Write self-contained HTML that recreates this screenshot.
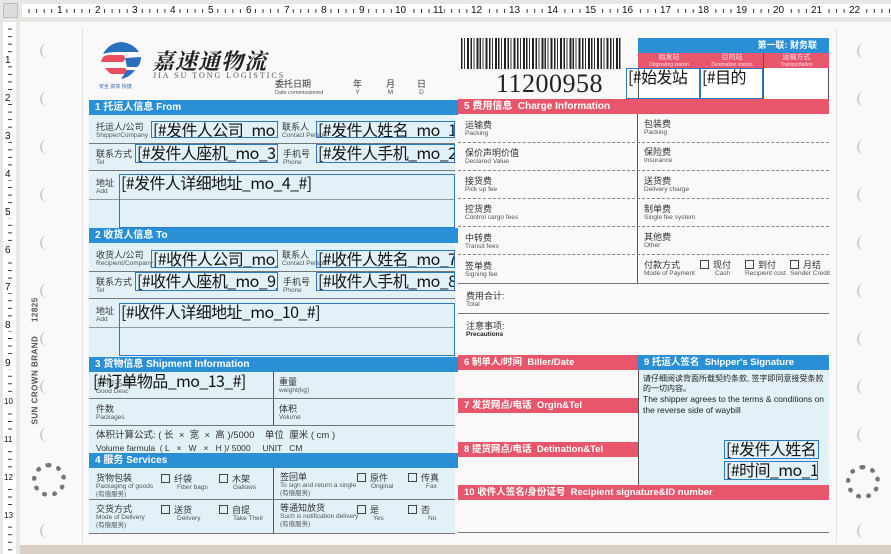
<!DOCTYPE html>
<html><head><meta charset="utf-8">
<style>
*{margin:0;padding:0;box-sizing:border-box}
body{width:891px;height:554px;overflow:hidden;background:#e9e7e4;font-family:"Liberation Sans","Noto Sans CJK SC",sans-serif;position:relative}
.a{position:absolute}
.rt{left:22px;top:4px;width:869px;height:13px;background:#fff repeating-linear-gradient(90deg,transparent 0,transparent 6.56px,#333 6.56px,#333 7.56px);background-size:7.56px 4px;background-repeat:repeat-x;background-position:0 5px}
.rl{left:3px;top:22px;width:13px;height:532px;background:#fff repeating-linear-gradient(180deg,transparent 0,transparent 6.56px,#333 6.56px,#333 7.56px);background-size:4px 7.56px;background-repeat:repeat-y;background-position:5px 0}
.n{position:absolute;font-size:10px;color:#111;background:#fff;line-height:11px;padding:0 1px}
.page{left:20px;top:22px;width:871px;height:524px;background:#fbf8fa}
.bb{background:#2b8fd6;color:#fff;font-size:10px;font-weight:bold;line-height:15px;padding-left:6px}
.rb{background:#e8566c;color:#fff;font-size:9.5px;font-weight:bold;line-height:15px;padding-left:6px}
.lt{font-size:9px;color:#333;line-height:10px}
.lt i{display:block;font-style:normal;font-size:6.5px;color:#555;line-height:8px}
.f{position:absolute;border:1px solid #2d78c4;font-family:"Noto Sans CJK SC",sans-serif;font-size:16px;line-height:15px;letter-spacing:-0.6px;color:#111;white-space:nowrap;overflow:hidden;padding-left:1px}
.hl{position:absolute;height:1px;background:#777}
.dl{position:absolute;height:0;border-top:1px dashed #888}
.vl{position:absolute;width:1px;background:#555}
.cy{background:#e2f1f7}
.pin{position:absolute;width:12px;height:14px;border-left:2px solid #ccc;border-radius:50%}
.cb{display:inline-block;width:9px;height:9px;border:1px solid #444;vertical-align:-1px;margin-right:4px}
</style></head><body>
<div class="a rt"></div>
<div class="a rl"></div>
<div class="a" style="left:3px;top:3px;width:15px;height:15px;border:1px solid #bbb;background:#ddd"></div>
<span class="n" style="left:56px;top:5px">1</span><span class="n" style="left:94px;top:5px">2</span><span class="n" style="left:131px;top:5px">3</span><span class="n" style="left:169px;top:5px">4</span><span class="n" style="left:207px;top:5px">5</span><span class="n" style="left:245px;top:5px">6</span><span class="n" style="left:283px;top:5px">7</span><span class="n" style="left:320px;top:5px">8</span><span class="n" style="left:358px;top:5px">9</span><span class="n" style="left:394px;top:5px">10</span><span class="n" style="left:432px;top:5px">11</span><span class="n" style="left:470px;top:5px">12</span><span class="n" style="left:508px;top:5px">13</span><span class="n" style="left:546px;top:5px">14</span><span class="n" style="left:584px;top:5px">15</span><span class="n" style="left:621px;top:5px">16</span><span class="n" style="left:659px;top:5px">17</span><span class="n" style="left:697px;top:5px">18</span><span class="n" style="left:735px;top:5px">19</span><span class="n" style="left:772px;top:5px">20</span><span class="n" style="left:810px;top:5px">21</span><span class="n" style="left:848px;top:5px">22</span>
<span class="n" style="left:4px;top:55px">1</span><span class="n" style="left:4px;top:93px">2</span><span class="n" style="left:4px;top:131px">3</span><span class="n" style="left:4px;top:169px">4</span><span class="n" style="left:4px;top:207px">5</span><span class="n" style="left:4px;top:245px">6</span><span class="n" style="left:4px;top:282px">7</span><span class="n" style="left:4px;top:320px">8</span><span class="n" style="left:4px;top:358px">9</span><span class="n" style="left:3px;top:396px;font-size:8px">10</span><span class="n" style="left:3px;top:434px;font-size:8px">11</span><span class="n" style="left:3px;top:472px;font-size:8px">12</span><span class="n" style="left:3px;top:510px;font-size:8px">13</span>

<div class="a page"></div>
<div class="a" style="left:20px;top:545px;width:871px;height:9px;background:#d8d0c4"></div>
<div class="vl" style="left:82px;top:28px;height:515px;background:#e4e0e4"></div>
<div class="vl" style="left:836px;top:28px;height:515px;background:#e4e0e4"></div>
<div class="pin" style="left:40px;top:44px"></div><div class="pin" style="left:40px;top:92px"></div><div class="pin" style="left:40px;top:140px"></div><div class="pin" style="left:40px;top:188px"></div><div class="pin" style="left:40px;top:236px"></div><div class="pin" style="left:40px;top:284px"></div><div class="pin" style="left:40px;top:332px"></div><div class="pin" style="left:40px;top:380px"></div><div class="pin" style="left:40px;top:428px"></div><div class="pin" style="left:40px;top:524px"></div>
<div class="pin" style="left:857px;top:44px"></div><div class="pin" style="left:857px;top:92px"></div><div class="pin" style="left:857px;top:140px"></div><div class="pin" style="left:857px;top:188px"></div><div class="pin" style="left:857px;top:236px"></div><div class="pin" style="left:857px;top:284px"></div><div class="pin" style="left:857px;top:332px"></div><div class="pin" style="left:857px;top:380px"></div><div class="pin" style="left:857px;top:428px"></div><div class="pin" style="left:857px;top:524px"></div>
<div class="a" style="top:355px;width:130px;transform:rotate(-90deg);transform-origin:center;font-size:8px;font-weight:bold;color:#555;letter-spacing:0.5px;left:-30px">SUN CROWN BRAND &nbsp;&nbsp;&nbsp; 12825</div>
<div class="a" style="left:32px;top:463px;width:34px;height:34px;border-radius:50%;border:5px dotted #777"></div>
<div class="a" style="left:846px;top:465px;width:34px;height:34px;border-radius:50%;border:5px dotted #777"></div>

<svg class="a" style="left:99px;top:40px" width="44" height="42" viewBox="0 0 44 42">
<path d="M4 14 Q10 3 22 2 Q34 3 40 12 L18 12 Q10 12 4 14Z" fill="#2b6fc0"/>
<path d="M2 22 Q3 15 10 15 L24 15 Q28 18 24 22 Z" fill="#e8505f"/>
<path d="M26 18 L42 17 Q42 24 38 27 L28 27 Z" fill="#2b6fc0"/>
<path d="M6 28 L26 28 Q30 31 26 34 L12 34 Q8 31 6 28Z" fill="#e8505f"/>
<path d="M28 30 L36 30 Q30 38 22 39 Z" fill="#2b6fc0"/>
</svg>
<div class="a" style="left:99px;top:83px;font-size:5px;color:#2b6fc0">安全 高效 快捷</div>
<div class="a" style="left:152px;top:45px;font-size:22px;color:#222;font-weight:bold;font-family:'Noto Serif CJK SC',serif;font-style:italic;letter-spacing:1px">嘉速通物流</div>
<div class="a" style="left:153px;top:71px;font-size:8px;color:#555;letter-spacing:2px;font-family:'Liberation Serif',serif">JIA SU TONG LOGISTICS</div>
<div class="a lt" style="left:275px;top:79px">委托日期<i style="font-size:5.5px">Date commissioned</i></div>
<div class="a lt" style="left:353px;top:79px;text-align:center">年<i>Y</i></div>
<div class="a lt" style="left:386px;top:79px;text-align:center">月<i>M</i></div>
<div class="a lt" style="left:417px;top:79px;text-align:center">日<i>D</i></div>

<div class="a cy" style="left:89px;top:114px;width:366px;height:420px"></div>
<div class="a bb" style="left:89px;top:100px;width:369px">1 托运人信息 From</div>
<div class="hl" style="left:89px;top:143px;width:366px"></div>
<div class="hl" style="left:89px;top:170px;width:366px"></div>
<div class="hl" style="left:89px;top:199px;width:366px;background:#999"></div>
<div class="a lt" style="left:96px;top:122px">托运人/公司<i>Shipper/Company</i></div>
<div class="a lt" style="left:282px;top:122px">联系人<i>Contact Person</i></div>
<div class="a lt" style="left:96px;top:149px">联系方式<i>Tel</i></div>
<div class="a lt" style="left:283px;top:149px">手机号<i>Phone</i></div>
<div class="a lt" style="left:96px;top:178px">地址<i>Add</i></div>
<div class="f" style="left:151px;top:121px;width:127px;height:17px">[#发件人公司_mo_</div>
<div class="f" style="left:316px;top:121px;width:139px;height:17px">[#发件人姓名_mo_1</div>
<div class="f" style="left:135px;top:144px;width:143px;height:19px">[#发件人座机_mo_3_</div>
<div class="f" style="left:316px;top:144px;width:139px;height:19px">[#发件人手机_mo_2</div>
<div class="f" style="left:119px;top:174px;width:336px;height:54px">[#发件人详细地址_mo_4_#]</div>

<div class="a bb" style="left:89px;top:228px;width:369px">2 收货人信息 To</div>
<div class="hl" style="left:89px;top:271px;width:366px"></div>
<div class="hl" style="left:89px;top:298px;width:366px"></div>
<div class="hl" style="left:89px;top:327px;width:366px;background:#999"></div>
<div class="a lt" style="left:96px;top:250px">收货人/公司<i>Recipient/Company</i></div>
<div class="a lt" style="left:282px;top:250px">联系人<i>Contact Person</i></div>
<div class="a lt" style="left:96px;top:277px">联系方式<i>Tel</i></div>
<div class="a lt" style="left:283px;top:277px">手机号<i>Phone</i></div>
<div class="a lt" style="left:96px;top:306px">地址<i>Add</i></div>
<div class="f" style="left:151px;top:250px;width:127px;height:18px">[#收件人公司_mo_</div>
<div class="f" style="left:316px;top:250px;width:139px;height:18px">[#收件人姓名_mo_7</div>
<div class="f" style="left:135px;top:272px;width:143px;height:19px">[#收件人座机_mo_9_</div>
<div class="f" style="left:316px;top:272px;width:139px;height:19px">[#收件人手机_mo_8</div>
<div class="f" style="left:119px;top:303px;width:336px;height:53px">[#收件人详细地址_mo_10_#]</div>

<div class="a bb" style="left:89px;top:357px;width:369px">3 货物信息 Shipment Information</div>
<div class="vl" style="left:273px;top:372px;height:54px"></div>
<div class="hl" style="left:89px;top:398px;width:366px"></div>
<div class="hl" style="left:89px;top:425px;width:366px"></div>
<div class="a lt" style="left:96px;top:378px;color:#777">货物名称<i>Good Desc</i></div>
<div class="a lt" style="left:279px;top:377px">重量<i>weight(kg)</i></div>
<div class="a lt" style="left:96px;top:404px">件数<i>Packages</i></div>
<div class="a lt" style="left:279px;top:404px">体积<i>Volume</i></div>
<div class="a" style="left:93px;top:372px;font-family:'Noto Sans CJK SC',sans-serif;font-size:16px;line-height:16px;letter-spacing:-0.6px;color:#111">[#订单物品_mo_13_#]</div>
<div class="a" style="left:96px;top:430px;font-size:9.5px;color:#333;line-height:12px;white-space:pre">体积计算公式: ( 长  ×  宽  ×  高 )/5000    单位  厘米 ( cm )
<span style="font-size:8.5px">Volume farmula  ( L   ×   W   ×   H )/ 5000     UNIT   CM</span></div>

<div class="a bb" style="left:89px;top:453px;width:369px">4 服务 Services</div>
<div class="vl" style="left:273px;top:468px;height:65px"></div>
<div class="hl" style="left:89px;top:499px;width:366px"></div>
<div class="hl" style="left:89px;top:533px;width:366px"></div>
<div class="a lt" style="left:96px;top:473px">货物包装<i>Packaging of goods<br>(有偿服务)</i></div>
<div class="a lt" style="left:161px;top:474px"><span class="cb"></span>纤袋<i style="padding-left:16px">Fiber bags</i></div>
<div class="a lt" style="left:219px;top:474px"><span class="cb"></span>木架<i style="padding-left:14px">Gallows</i></div>
<div class="a lt" style="left:280px;top:472px">签回单<i>To sign and return a single<br>(有偿服务)</i></div>
<div class="a lt" style="left:357px;top:473px"><span class="cb"></span>原件<i style="padding-left:14px">Original</i></div>
<div class="a lt" style="left:408px;top:473px"><span class="cb"></span>传真<i style="padding-left:18px">Fax</i></div>
<div class="a lt" style="left:96px;top:504px">交货方式<i>Mode of Delivery<br>(有偿服务)</i></div>
<div class="a lt" style="left:161px;top:505px"><span class="cb"></span>送货<i style="padding-left:16px">Delivery</i></div>
<div class="a lt" style="left:219px;top:505px"><span class="cb"></span>自提<i style="padding-left:14px">Take Their</i></div>
<div class="a lt" style="left:280px;top:503px">等通知放货<i>Such is notification delivery<br>(有偿服务)</i></div>
<div class="a lt" style="left:357px;top:505px"><span class="cb"></span>是<i style="padding-left:16px">Yes</i></div>
<div class="a lt" style="left:408px;top:505px"><span class="cb"></span>否<i style="padding-left:20px">No</i></div>

<div class="a" style="left:461px;top:38px;width:161px;height:31px;background:repeating-linear-gradient(90deg,#222 0,#222 1.5px,#fff 1.5px,#fff 3px,#333 3px,#333 4px,#fff 4px,#fff 6px,#222 6px,#222 8px,#fff 8px,#fff 9.3px)"></div>
<div class="a" style="left:496px;top:69px;font-family:'Liberation Serif',serif;font-size:26px;color:#222;letter-spacing:0.5px">11200958</div>

<div class="a bb" style="left:638px;top:38px;width:191px;height:15px;text-align:right;padding-right:12px;font-size:9px">第一联: 财务联</div>
<div class="a" style="left:638px;top:53px;width:191px;height:15px;background:#e8566c"></div>
<div class="a" style="left:638px;top:54px;width:62px;text-align:center;color:#fde;font-size:7px;line-height:7px">始发站<br><span style="font-size:5px">Originating station</span></div>
<div class="a" style="left:701px;top:54px;width:62px;text-align:center;color:#fde;font-size:7px;line-height:7px">目的站<br><span style="font-size:5px">Destination station</span></div>
<div class="a" style="left:764px;top:54px;width:65px;text-align:center;color:#fde;font-size:7px;line-height:7px">运输方式<br><span style="font-size:5px">Transportation</span></div>
<div class="a" style="left:638px;top:68px;width:191px;height:31px;border-left:1px solid #555;border-right:1px solid #555;background:#fff"></div>
<div class="vl" style="left:763px;top:53px;height:46px"></div>
<div class="f" style="left:626px;top:68px;width:74px;height:31px">[#始发站</div>
<div class="f" style="left:700px;top:68px;width:63px;height:31px">[#目的</div>

<div class="a rb" style="left:458px;top:99px;width:371px;font-size:10px">5 费用信息 &nbsp;Charge Information</div>
<div class="vl" style="left:637px;top:114px;height:169px"></div>
<div class="dl" style="left:458px;top:142px;width:371px"></div>
<div class="dl" style="left:458px;top:170px;width:371px"></div>
<div class="dl" style="left:458px;top:198px;width:371px"></div>
<div class="dl" style="left:458px;top:226px;width:371px"></div>
<div class="dl" style="left:458px;top:254px;width:371px"></div>
<div class="hl" style="left:458px;top:283px;width:371px"></div>
<div class="hl" style="left:458px;top:313px;width:371px"></div>
<div class="a lt" style="left:465px;top:120px">运输费<i>Packing</i></div>
<div class="a lt" style="left:644px;top:119px">包装费<i>Packing</i></div>
<div class="a lt" style="left:465px;top:148px">保价声明价值<i>Declared Value</i></div>
<div class="a lt" style="left:644px;top:147px">保险费<i>Insurance</i></div>
<div class="a lt" style="left:465px;top:176px">接货费<i>Pick up fee</i></div>
<div class="a lt" style="left:644px;top:176px">送货费<i>Delivery charge</i></div>
<div class="a lt" style="left:465px;top:204px">控货费<i>Control cargo fees</i></div>
<div class="a lt" style="left:644px;top:204px">制单费<i>Single fee system</i></div>
<div class="a lt" style="left:465px;top:233px">中转费<i>Transit fees</i></div>
<div class="a lt" style="left:644px;top:232px">其他费<i>Other</i></div>
<div class="a lt" style="left:465px;top:261px">签单费<i>Signing fee</i></div>
<div class="a lt" style="left:644px;top:260px">付款方式<i>Mode of Payment</i></div>
<div class="a lt" style="left:700px;top:260px"><span class="cb"></span>现付<i style="padding-left:15px">Cash</i></div>
<div class="a lt" style="left:745px;top:260px"><span class="cb"></span>到付<i style="padding-left:0">Recipient cost</i></div>
<div class="a lt" style="left:790px;top:260px"><span class="cb"></span>月结<i style="padding-left:0">Sender Credit</i></div>
<div class="a lt" style="left:466px;top:291px">费用合计:<i>Total</i></div>
<div class="a lt" style="left:466px;top:321px">注意事项:<i style="font-weight:bold;color:#222">Precautions</i></div>

<div class="a rb" style="left:458px;top:355px;width:180px">6 制单人/时间 &nbsp;Biller/Date</div>
<div class="a bb" style="left:638px;top:355px;width:191px;font-size:9.5px">9 托运人签名 &nbsp;Shipper's Signature</div>
<div class="a cy" style="left:638px;top:370px;width:191px;height:115px;border-left:1px solid #555"></div>
<div class="a" style="left:643px;top:374px;width:184px;font-size:8px;line-height:10px;color:#222">请仔细阅读背面所载契约条款, 签字即同意接受条款的一切内容。<br><span style="font-size:8.5px;line-height:11px">The shipper agrees to the terms &amp; conditions on the reverse side of waybill</span></div>
<div class="a rb" style="left:458px;top:398px;width:180px">7 发货网点/电话 &nbsp;Orgin&amp;Tel</div>
<div class="a rb" style="left:458px;top:442px;width:180px">8 提货网点/电话 &nbsp;Detination&amp;Tel</div>
<div class="f" style="left:724px;top:440px;width:95px;height:19px">[#发件人姓名</div>
<div class="f" style="left:724px;top:461px;width:94px;height:19px">[#时间_mo_15</div>
<div class="a rb" style="left:458px;top:485px;width:371px">10 收件人签名/身份证号 &nbsp;Recipient signature&amp;ID number</div>
<div class="hl" style="left:458px;top:532px;width:371px"></div>
</body></html>
